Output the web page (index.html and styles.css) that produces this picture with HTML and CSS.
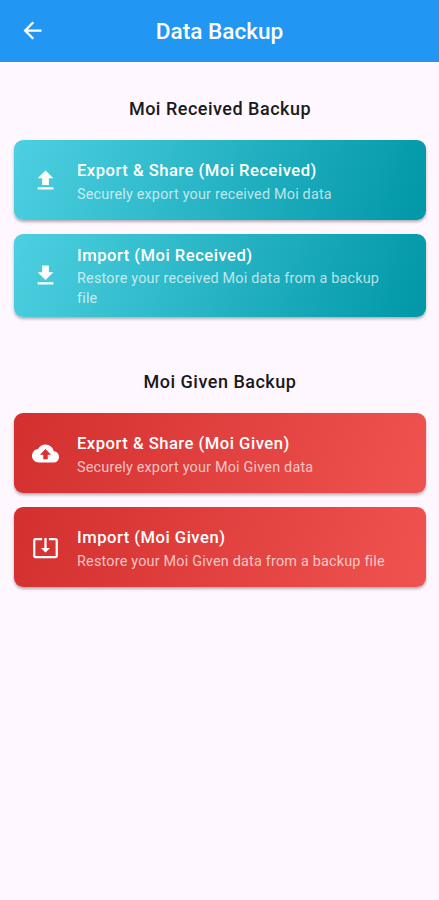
FILE: index.html
```
<!DOCTYPE html>
<html lang="en">
<head>
    <meta charset="UTF-8">
    <title>Data Backup</title>
    <link rel="stylesheet" href="styles.css">
</head>
<body>
    <header class="app-bar">
        <a href="#" class="back" aria-label="Back">
            <svg viewBox="0 0 24 24"><path d="M20 11H7.83l5.59-5.59L12 4l-8 8 8 8 1.41-1.41L7.83 13H20v-2z"/></svg>
        </a>
        <h1>Data Backup</h1>
    </header>

    <main>
        <section class="section">
            <h2>Moi Received Backup</h2>
            <button class="card received">
                <svg viewBox="0 0 24 24"><path d="M9 16h6v-6h4l-7-7-7 7h4zm-4 2h14v2H5z"/></svg>
                <span class="card-text">
                    <span class="card-title">Export &amp; Share (Moi Received)</span>
                    <span class="card-desc">Securely export your received Moi data</span>
                </span>
            </button>
            <button class="card received tall">
                <svg viewBox="0 0 24 24"><path d="M19 9h-4V3H9v6H5l7 7 7-7zM5 18v2h14v-2H5z"/></svg>
                <span class="card-text">
                    <span class="card-title">Import (Moi Received)</span>
                    <span class="card-desc">Restore your received Moi data from a backup file</span>
                </span>
            </button>
        </section>

        <section class="section">
            <h2>Moi Given Backup</h2>
            <button class="card given">
                <svg viewBox="0 0 24 24"><path d="M19.35 10.04C18.67 6.59 15.64 4 12 4 9.11 4 6.6 5.64 5.35 8.04 2.34 8.36 0 10.91 0 14c0 3.31 2.69 6 6 6h13c2.76 0 5-2.24 5-5 0-2.64-2.05-4.78-4.65-4.96zM14 13v4h-4v-4H7l5-5 5 5h-3z"/></svg>
                <span class="card-text">
                    <span class="card-title">Export &amp; Share (Moi Given)</span>
                    <span class="card-desc">Securely export your Moi Given data</span>
                </span>
            </button>
            <button class="card given">
                <svg viewBox="0 0 24 24"><path d="M12 16.5l4-4h-3v-9h-2v9H8l4 4zm9-13h-6v1.99h6v14.03H3V5.49h6V3.5H3c-1.1 0-2 .9-2 2v14c0 1.1.9 2 2 2h18c1.1 0 2-.9 2-2v-14c0-1.1-.9-2-2-2z"/></svg>
                <span class="card-text">
                    <span class="card-title">Import (Moi Given)</span>
                    <span class="card-desc">Restore your Moi Given data from a backup file</span>
                </span>
            </button>
        </section>
    </main>
</body>
</html>
```
FILE: styles.css
```
* { box-sizing: border-box; }
body {
    margin: 0;
    min-height: 900px;
    background: #fef7ff;
    font-family: Roboto, sans-serif;
}
.app-bar {
    display: grid;
    grid-template-columns: 64px 1fr 64px;
    align-items: center;
    height: 62px;
    background: #2196f3;
    color: white;
}
.app-bar h1 {
    margin: 0;
    font-size: 22.6px;
    font-weight: 500;
    text-align: center;
}
.back {
    display: flex;
    justify-content: center;
    padding-bottom: 1px;
}
svg {
    display: block;
    flex: none;
    width: 27px;
    height: 27px;
    fill: white;
}
main { padding: 34px 13px 0 14px; }
.section {
    display: flex;
    flex-direction: column;
    gap: 14px;
    margin-bottom: 52px;
}
.section h2 {
    margin: 0 0 4px;
    font-size: 18px;
    line-height: 26px;
    font-weight: 500;
    letter-spacing: 0.5px;
    color: #1a1a1a;
    text-align: center;
}
.card {
    display: flex;
    align-items: center;
    gap: 18px;
    width: 100%;
    height: 80px;
    padding: 0 40px 0 18px;
    border: none;
    border-radius: 9px;
    box-shadow: 0 2px 3px rgba(0, 0, 0, 0.3);
    color: white;
    font-family: inherit;
    text-align: left;
}
.received { background: linear-gradient(110deg, #4dd0e1, #0097a7); }
.given { background: linear-gradient(110deg, #d32f2f, #ef5350); }
.card-text {
    display: flex;
    flex-direction: column;
    gap: 3px;
    padding-top: 5px;
}
.card-title {
    font-size: 16.6px;
    line-height: 22px;
    font-weight: 500;
    letter-spacing: 0.5px;
}
.card-desc {
    font-size: 14.4px;
    line-height: 20px;
    letter-spacing: 0.2px;
    color: rgba(255, 255, 255, 0.7);
}
.card.tall { height: 83px; }
.tall .card-text {
    gap: 2px;
    padding-top: 3px;
}
```
